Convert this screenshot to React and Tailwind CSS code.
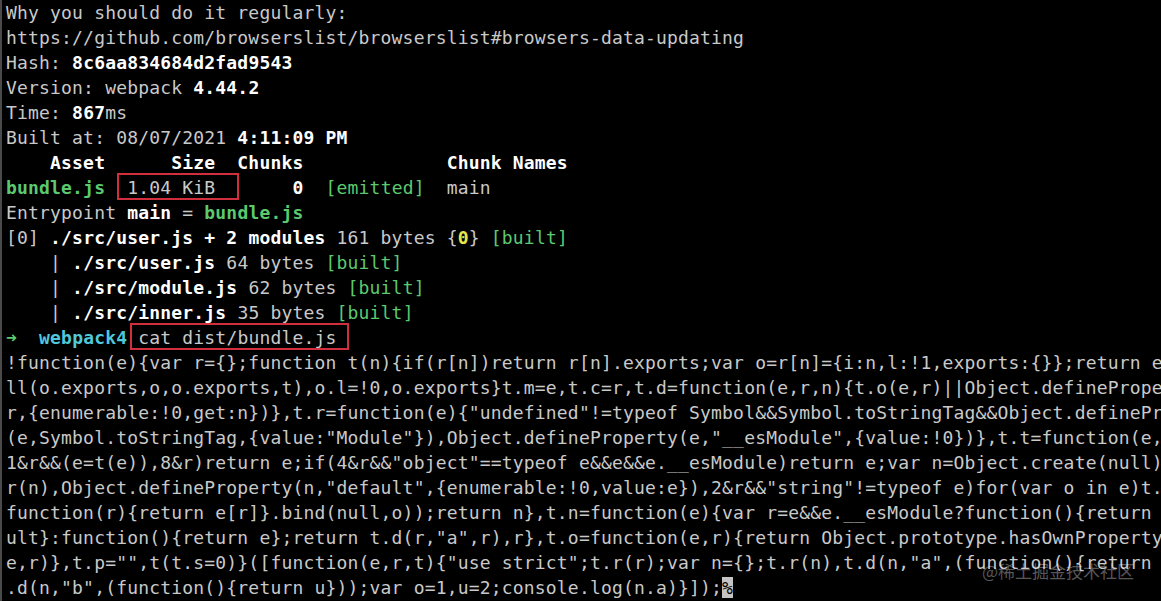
const N = 'text-[#c9c9c9]';
const B = 'text-white font-bold';
const G = 'text-[#5cc96e]';
const GB = 'text-[#5cc96e] font-bold';
const Y = 'text-[#e6e64c] font-bold';
const C = 'text-[#4fc8da] font-bold';

function Seg({ cls, children }) {
  return <span className={cls}>{children}</span>;
}

function Line({ children }) {
  return <div className="h-[25px] leading-[25px] whitespace-pre">{children}</div>;
}

function Boxed({ children, className }) {
  return (
    <span className="relative">
      {children}
      <span className={`absolute border-2 border-[#d12e3e] pointer-events-none ${className}`} />
    </span>
  );
}

const codeLines = [
  '!function(e){var r={};function t(n){if(r[n])return r[n].exports;var o=r[n]={i:n,l:!1,exports:{}};return e[n].ca',
  'll(o.exports,o,o.exports,t),o.l=!0,o.exports}t.m=e,t.c=r,t.d=function(e,r,n){t.o(e,r)||Object.defineProperty(e,',
  'r,{enumerable:!0,get:n})},t.r=function(e){"undefined"!=typeof Symbol&&Symbol.toStringTag&&Object.defineProperty',
  '(e,Symbol.toStringTag,{value:"Module"}),Object.defineProperty(e,"__esModule",{value:!0})},t.t=function(e,r){if(',
  '1&r&&(e=t(e)),8&r)return e;if(4&r&&"object"==typeof e&&e&&e.__esModule)return e;var n=Object.create(null);if(t.',
  'r(n),Object.defineProperty(n,"default",{enumerable:!0,value:e}),2&r&&"string"!=typeof e)for(var o in e)t.d(n,o,',
  'function(r){return e[r]}.bind(null,o));return n},t.n=function(e){var r=e&&e.__esModule?function(){return e.defa',
  'ult}:function(){return e};return t.d(r,"a",r),r},t.o=function(e,r){return Object.prototype.hasOwnProperty.call(',
  'e,r)},t.p="",t(t.s=0)}([function(e,r,t){"use strict";t.r(r);var n={};t.r(n),t.d(n,"a",(function(){return o}))',
];

export default function App() {
  return (
    <div className="relative w-[1161px] h-[601px] overflow-hidden bg-black border-l-2 border-[#4a4a4a] pl-[4px] font-['DejaVu_Sans_Mono',monospace] text-[18px] tracking-[0.18px] text-[#c9c9c9]">
      <Line>Why you should do it regularly:</Line>
      <Line>https://github.com/browserslist/browserslist#browsers-data-updating</Line>
      <Line>
        Hash: <Seg cls={B}>8c6aa834684d2fad9543</Seg>
      </Line>
      <Line>
        Version: webpack <Seg cls={B}>4.44.2</Seg>
      </Line>
      <Line>
        Time: <Seg cls={B}>867</Seg>ms
      </Line>
      <Line>
        Built at: 08/07/2021 <Seg cls={B}>4:11:09 PM</Seg>
      </Line>
      <Line>
        <Seg cls={B}>{'    Asset      Size  Chunks             Chunk Names'}</Seg>
      </Line>
      <Line>
        <Seg cls={GB}>bundle.js</Seg>
        {'  '}
        <Boxed className="-left-[10px] -right-[24px] -top-[4px] -bottom-[2px]">1.04 KiB</Boxed>
        {'       '}
        <Seg cls={B}>0</Seg>
        {'  '}
        <Seg cls={G}>[emitted]</Seg>
        {'  main'}
      </Line>
      <Line>
        Entrypoint <Seg cls={B}>main</Seg> = <Seg cls={GB}>bundle.js</Seg>
      </Line>
      <Line>
        [0] <Seg cls={B}>./src/user.js + 2 modules</Seg> 161 bytes {'{'}
        <Seg cls={Y}>0</Seg>
        {'} '}
        <Seg cls={G}>[built]</Seg>
      </Line>
      <Line>
        {'    | '}
        <Seg cls={B}>./src/user.js</Seg> 64 bytes <Seg cls={G}>[built]</Seg>
      </Line>
      <Line>
        {'    | '}
        <Seg cls={B}>./src/module.js</Seg> 62 bytes <Seg cls={G}>[built]</Seg>
      </Line>
      <Line>
        {'    | '}
        <Seg cls={B}>./src/inner.js</Seg> 35 bytes <Seg cls={G}>[built]</Seg>
      </Line>
      <Line>
        <Seg cls={GB}>➜</Seg>
        {'  '}
        <Seg cls={C}>webpack4</Seg>{' '}
        <Boxed className="-left-[8px] -right-[12px] -top-[4px] -bottom-[2px]">cat dist/bundle.js</Boxed>
      </Line>
      {codeLines.map((l, i) => (
        <Line key={i}>{l}</Line>
      ))}
      <Line>
        {'.d(n,"b",(function(){return u}));var o=1,u=2;console.log(n.a)}]);'}
        <span className="bg-[#c4c4c4] text-black">%</span>
      </Line>
      <div className="absolute left-[980px] top-[561px] font-['Noto_Sans_CJK_SC',sans-serif] text-[17px] leading-[20px] tracking-normal text-white/35">
        @稀土掘金技术社区
      </div>
    </div>
  );
}
